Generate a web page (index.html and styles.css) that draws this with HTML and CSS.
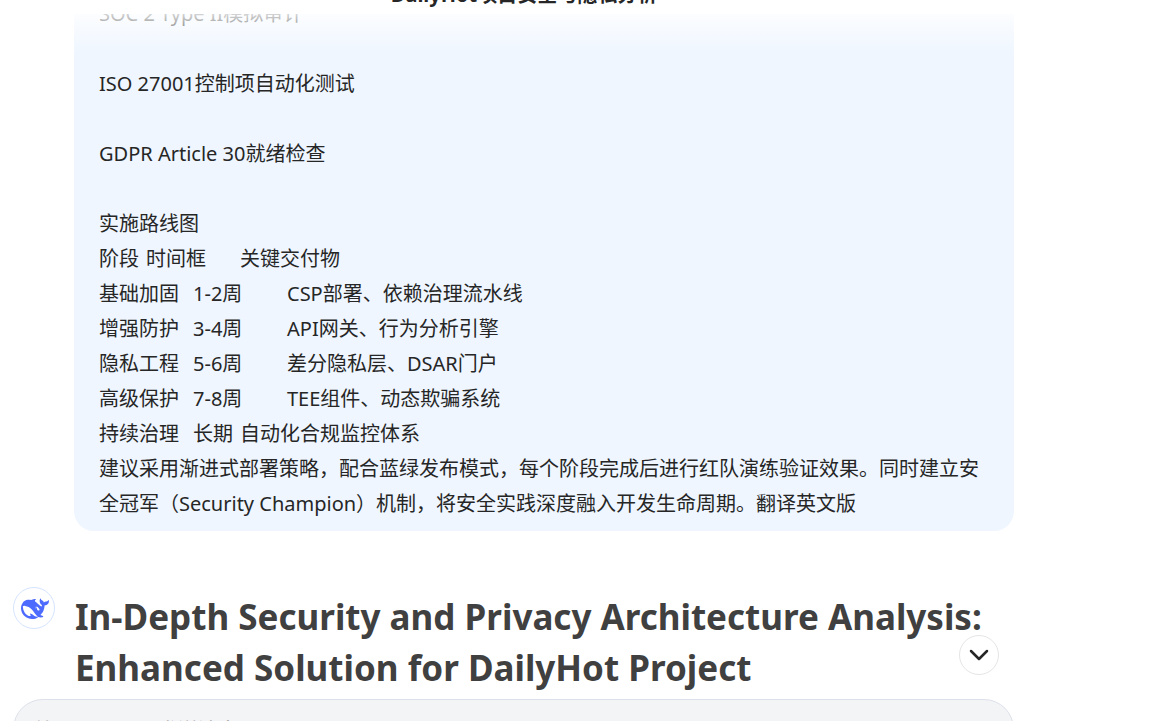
FILE: index.html
```html
<!DOCTYPE html>
<html lang="zh-CN">
<head>
<meta charset="utf-8">
<title>DailyHot项目安全与隐私分析</title>
<link rel="stylesheet" href="styles.css">
</head>
<body>
<div class="chat">
  <header class="topbar"><div class="topbar-title">DailyHot项目安全与隐私分析</div></header>
  <main class="thread">
    <div class="question">SOC 2 Type II模拟审计

ISO 27001控制项自动化测试

GDPR Article 30就绪检查

实施路线图
阶段&#9;时间框&#9;关键交付物
基础加固&#9;1-2周&#9;CSP部署、依赖治理流水线
增强防护&#9;3-4周&#9;API网关、行为分析引擎
隐私工程&#9;5-6周&#9;差分隐私层、DSAR门户
高级保护&#9;7-8周&#9;TEE组件、动态欺骗系统
持续治理&#9;长期&#9;自动化合规监控体系
建议采用渐进式部署策略，配合蓝绿发布模式，每个阶段完成后进行红队演练验证效果。同时建立安全冠军（Security Champion）机制，将安全实践深度融入开发生命周期。翻译英文版</div>
    <article class="answer">
      <div class="avatar">
        <svg class="whale" viewBox="0 0 24 24" aria-hidden="true"><path d="M23.748 4.482c-.254-.124-.364.113-.512.234-.051.039-.094.09-.137.136-.372.397-.806.657-1.373.626-.829-.046-1.537.214-2.163.848-.133-.782-.575-1.248-1.247-1.548-.352-.156-.708-.311-.955-.65-.172-.241-.219-.51-.305-.774-.055-.16-.11-.323-.293-.35-.2-.031-.278.136-.356.276-.313.572-.434 1.202-.422 1.84.027 1.436.633 2.58 1.838 3.393.137.093.172.187.129.323-.082.28-.18.552-.266.833-.055.179-.137.217-.329.14a5.526 5.526 0 0 1-1.736-1.18c-.857-.828-1.631-1.742-2.597-2.458a11.365 11.365 0 0 0-.689-.471c-.985-.957.13-1.743.388-1.836.27-.098.093-.432-.779-.428-.872.004-1.67.295-2.687.684a3.055 3.055 0 0 1-.465.137 9.597 9.597 0 0 0-2.883-.102c-1.885.21-3.39 1.102-4.497 2.623C.082 8.606-.231 10.684.152 12.85c.403 2.284 1.569 4.175 3.36 5.653 1.858 1.533 3.997 2.284 6.438 2.14 1.482-.085 3.133-.284 4.994-1.86.47.234.962.327 1.78.397.63.059 1.236-.03 1.705-.128.735-.156.684-.837.419-.961-2.155-1.004-1.682-.595-2.113-.926 1.096-1.296 2.746-2.642 3.392-7.003.05-.347.007-.565 0-.845-.004-.17.035-.237.23-.256a4.173 4.173 0 0 0 1.545-.475c1.396-.763 1.96-2.015 2.093-3.517.02-.23-.004-.467-.247-.588zM11.581 18c-2.089-1.642-3.102-2.183-3.52-2.16-.392.024-.321.471-.235.763.09.288.207.486.371.739.114.167.192.416-.113.603-.673.416-1.842-.14-1.897-.167-1.361-.802-2.5-1.86-3.301-3.307-.774-1.393-1.224-2.887-1.298-4.482-.02-.386.093-.522.477-.592a4.696 4.696 0 0 1 1.529-.039c2.132.312 3.946 1.265 5.468 2.774.868.86 1.525 1.887 2.202 2.891.72 1.066 1.494 2.082 2.48 2.914.348.292.625.514.891.677-.802.09-2.14.11-3.054-.614zm1-6.44a.306.306 0 0 1 .415-.287.302.302 0 0 1 .2.288.306.306 0 0 1-.31.307.303.303 0 0 1-.304-.308zm3.11 1.596c-.2.081-.399.151-.59.16a1.245 1.245 0 0 1-.798-.254c-.274-.23-.47-.358-.552-.758a1.73 1.73 0 0 1 .016-.588c.07-.327-.008-.537-.239-.727-.187-.156-.426-.199-.688-.199a.559.559 0 0 1-.254-.078c-.11-.054-.2-.19-.114-.358.028-.054.16-.186.192-.21.356-.202.767-.136 1.146.016.352.144.618.408 1.001.782.391.451.462.576.685.914.176.265.336.537.445.848.067.195-.019.354-.25.452z"/></svg>
      </div>
      <h1 class="answer-title">In-Depth Security and Privacy Architecture Analysis: Enhanced Solution for DailyHot Project</h1>
    </article>
    <button class="to-bottom" type="button" aria-label="滚动到底部">
      <svg class="chevron" viewBox="0 0 20 12" aria-hidden="true"><path d="M2 2l8 8 8-8"/></svg>
    </button>
  </main>
  <footer class="composer">
    <textarea class="composer-input" aria-label="给 DeepSeek 发送消息" placeholder="给 DeepSeek 发送消息"></textarea>
  </footer>
</div>
</body>
</html>
```
FILE: styles.css
```css
* {
  box-sizing: border-box;
}

body {
  margin: 0;
  background: #fff;
  color: #262626;
  font-family: "Noto Sans", "Noto Sans CJK SC", sans-serif;
  font-size: 20px;
  line-height: 35px;
}

.chat {
  display: flex;
  flex-direction: column;
  height: 100vh;
  padding-right: 136px;
  overflow: hidden;
}

.topbar {
  display: flex;
  flex: 0 0 14px;
  align-items: flex-end;
  justify-content: center;
  min-height: 0;
  padding: 0 0 3px 34px;
}

.topbar-title {
  font-weight: 700;
  line-height: 32px;
}

.thread {
  position: relative;
  display: flex;
  flex: 1;
  flex-direction: column;
  justify-content: flex-end;
  gap: 56px;
  min-height: 0;
  padding: 0 0 6px 13px;
  overflow: hidden;
}

.thread::before {
  position: absolute;
  top: 0;
  right: 0;
  left: 0;
  height: 40px;
  background: linear-gradient(#fffc, #fff0);
  content: "";
}

.question {
  margin-left: 61px;
  padding: 8px 25px 10px;
  border-radius: 20px;
  background: #eff6ff;
  white-space: pre-wrap;
  tab-size: 47px;
}

.answer {
  display: flex;
  gap: 20px;
}

.avatar {
  display: flex;
  flex: 0 0 42px;
  align-items: center;
  justify-content: center;
  height: 42px;
  padding: 2px 0 0 2px;
  border: 1px solid #d5e4ff;
  border-radius: 50%;
}

.whale {
  width: 28px;
  height: 28px;
  fill: #4d6bfe;
}

.answer-title {
  margin: 4px 0 0;
  color: #404040;
  font-size: 35px;
  font-weight: 660;
  line-height: 51px;
}

.to-bottom {
  position: absolute;
  right: 15px;
  bottom: 24px;
  display: flex;
  align-items: center;
  justify-content: center;
  width: 40px;
  height: 40px;
  padding: 0;
  border: 1px solid #e5e5e5;
  border-radius: 50%;
  background: #fff;
}

.chevron {
  width: 20px;
  height: 12px;
  fill: none;
  stroke: #262626;
  stroke-width: 2.5;
  stroke-linecap: round;
  stroke-linejoin: round;
}

.composer {
  flex: 0 0 22px;
  min-height: 0;
  height: 22px;
  padding-left: 13px;
}

.composer-input {
  display: block;
  width: 100%;
  height: 120px;
  padding: 13px 20px;
  border: 1px solid #dce0e9;
  border-radius: 30px;
  background: #f3f4f6;
  font: inherit;
  resize: none;
}

.composer-input::placeholder {
  color: #a3a3a3;
}
```
